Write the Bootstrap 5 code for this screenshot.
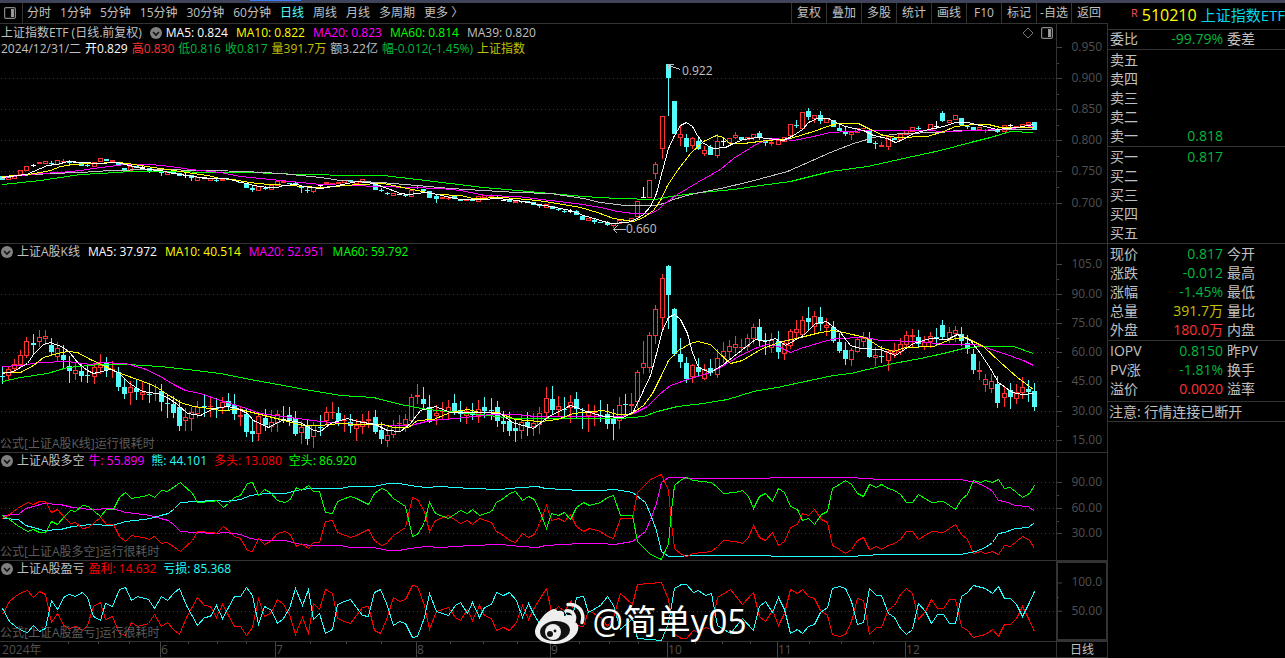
<!DOCTYPE html>
<html lang="zh-CN">
<head>
<meta charset="utf-8">
<meta name="viewport" content="width=device-width, initial-scale=1">
<title>上证指数ETF</title>
<link href="https://cdn.jsdelivr.net/npm/bootstrap@5.3.0/dist/css/bootstrap.min.css" rel="stylesheet">
<style>
:root{--line:#333;--txt:#c0c0c0;--dim:#505050}
body{background:#000;color:var(--txt);font:12px/16px "Open Sans","Noto Sans CJK SC",sans-serif}
.strip{height:3px;background:#40445a}
.strip i{display:block;width:51px;height:1px;margin-left:250px;background:#3c7cf0}
.ln-b{border-bottom:1px solid var(--line)}
.toolbar{height:21px;white-space:nowrap}
.toolbar button,.tool-icon{background:none;border:0;padding:0;color:inherit;line-height:20px}
.toolbar .on{color:#54fcfc}
.periods{gap:9px;padding-left:4px}
.toolbar .win{width:19px;border-right:1px solid var(--line);margin-right:-5px}
.acts{padding-right:2px}
.acts button{width:35px;border-left:1px solid var(--line);text-align:center}
.panel{min-height:60px}
.p1{flex:219 1 0}.p2{flex:208 1 0}.p3{flex:107 1 0}.p4{flex:80 1 0}
.plot,.scale{position:relative}
.plot>svg.draw,.scale>svg{position:absolute;left:0;top:0;width:100%;height:100%}
.scale>svg{width:5px}
.head{position:relative;gap:4px;padding-left:1px;white-space:nowrap;height:16px}
.vals{gap:8px}
.p3 .vals,.p4 .vals{gap:7px}
.p1 .plot{padding-top:1px}
.scale{width:52px;border-left:1px solid var(--line);border-right:1px solid var(--line);color:var(--dim)}
.scale span{position:absolute;right:5px;transform:translateY(-50%)}
.scale.sel{border:1px solid var(--line);outline:1px solid var(--line);outline-offset:-2px}
.slow{position:absolute;left:0;bottom:0;color:#5c5c5c;white-space:nowrap}
.tip{position:absolute;transform:translateY(-50%)}
.tools{position:absolute;right:3px;top:3px;gap:7px}
.time{height:16px;color:var(--dim)}
.time .plot>span{position:absolute;top:0;line-height:15px}
.time .scale{color:var(--txt);line-height:15px}
.quote{width:177px;font-size:14px;line-height:17px}
.quote table{width:100%;table-layout:fixed}
.quote th,.quote td{font-weight:400;padding:0;height:19px;vertical-align:top;white-space:nowrap;overflow:hidden}
.quote th{padding-left:2px}
.quote td+th{padding-left:4px}
.quote th:first-child{width:40px}.quote td{width:75px;text-align:right}
.padt{padding-top:1px}
.padb{padding-bottom:2px}
.note{height:20px;line-height:19px;padding-left:1px}
.code{height:27px;font-size:16px;line-height:24px}
.code small{font-size:11px;line-height:20px;color:#ff5050}
.code b{font-weight:400;font-size:15px;color:#00d8f0}
.w{color:#fff}.y{color:#ff0}.m{color:#f0f}.g{color:#0f0}.c{color:#2ff}
.r{color:#f00}.up{color:#ff3232}.dn{color:#00b83c}.vol{color:#c0c000}
.mark-user{position:absolute;left:50.7%;bottom:0;color:#fff;font-size:34px;line-height:40px;white-space:nowrap;gap:6px;z-index:3;text-shadow:0 0 2px #000}
.mark-user svg{overflow:visible}
</style>
</head>
<body>
<svg width="0" height="0" class="position-absolute" aria-hidden="true">
  <symbol id="fold" viewBox="0 0 12 12"><circle cx="6" cy="6" r="6" fill="#808080"/><path d="M3 5l3 3 3-3" fill="none" stroke="#111" stroke-width="1.6"/></symbol>
  <symbol id="pane" viewBox="0 0 12 12"><rect x=".6" y=".6" width="10.8" height="10.8" rx="1.5" fill="none" stroke="#888" stroke-width="1.2"/><rect x="7" y="2" width="3" height="8" fill="#999"/></symbol>
</svg>
<div class="min-vh-100 d-flex flex-column">
  <div class="strip flex-shrink-0"><i></i></div>
  <div class="d-flex flex-fill">
    <main class="d-flex flex-column flex-fill">
      <nav class="toolbar ln-b d-flex justify-content-between">
        <div class="periods d-flex">
          <button class="win d-flex align-items-center" aria-label="窗口"><svg width="12" height="12"><use href="#pane"/></svg></button>
          <button>分时</button><button>1分钟</button><button>5分钟</button><button>15分钟</button><button>30分钟</button><button>60分钟</button><button class="on">日线</button><button>周线</button><button>月线</button><button>多周期</button><button>更多 〉</button>
        </div>
        <div class="acts d-flex">
          <button>复权</button><button>叠加</button><button>多股</button><button>统计</button><button>画线</button><button>F10</button><button>标记</button><button>-自选</button><button>返回</button>
        </div>
      </nav>

      <section class="panel p1 ln-b d-flex">
        <div class="plot flex-fill" id="k1">
          <div class="head d-flex align-items-center"><span class="ps-0 pe-1">上证指数ETF (日线.前复权)</span><svg width="12" height="12"><use href="#fold"/></svg><div class="vals d-flex"><span class="w">MA5: 0.824</span><span class="y">MA10: 0.822</span><span class="m">MA20: 0.823</span><span class="g">MA60: 0.814</span><span>MA39: 0.820</span></div></div>
          <div class="head d-flex"><span>2024/12/31/二</span><span class="w">开0.829</span><span class="up">高0.830</span><span class="dn">低0.816</span><span class="dn">收0.817</span><span class="vol">量391.7万</span><span>额3.22亿</span><span class="dn">幅-0.012(-1.45%)</span><span class="vol">上证指数</span></div>
          <div class="tools d-flex"><button class="tool-icon d-flex" aria-label="标注"><svg width="12" height="12"><path d="M6 1l5 5-5 5-5-5z" fill="none" stroke="#777"/></svg></button><button class="tool-icon d-flex" aria-label="侧栏"><svg width="12" height="12"><use href="#pane"/></svg></button></div>
        </div>
        <div class="scale"></div>
      </section>

      <section class="panel p2 ln-b d-flex">
        <div class="plot flex-fill" id="k2">
          <div class="head d-flex align-items-center"><svg width="12" height="12"><use href="#fold"/></svg><span>上证A股K线</span><div class="vals d-flex ms-1 ps-0"><span class="w">MA5: 37.972</span><span class="y">MA10: 40.514</span><span class="m">MA20: 52.951</span><span class="g">MA60: 59.792</span></div></div>
          <div class="slow">公式[上证A股K线]运行很耗时</div>
        </div>
        <div class="scale"></div>
      </section>

      <section class="panel p3 ln-b d-flex">
        <div class="plot flex-fill" id="k3">
          <div class="head d-flex align-items-center"><svg width="12" height="12"><use href="#fold"/></svg><span>上证A股多空</span><div class="vals d-flex"><span class="m">牛: 55.899</span><span class="c">熊: 44.101</span><span class="r">多头: 13.080</span><span class="g">空头: 86.920</span></div></div>
          <div class="slow">公式[上证A股多空]运行很耗时</div>
        </div>
        <div class="scale"></div>
      </section>

      <section class="panel p4 ln-b d-flex">
        <div class="plot flex-fill" id="k4">
          <div class="head d-flex align-items-center"><svg width="12" height="12"><use href="#fold"/></svg><span>上证A股盈亏</span><div class="vals d-flex"><span class="r">盈利: 14.632</span><span class="c">亏损: 85.368</span></div></div>
          <div class="slow">公式[上证A股盈亏]运行很耗时</div>
          <div class="mark-user d-flex align-items-center">
            <svg width="51" height="40" viewBox="0 -2 51 40"><path d="M20 9c5-2 10-2 9 4 6-2 12-1 10 6 4 1 5 4 4 8-2 8-12 14-23 14C9 41 0 36 0 29 0 22 11 7 19 6c4 0 4 3 3 6z" fill="#eee"/><ellipse cx="20" cy="28" rx="15" ry="10" fill="#111" transform="rotate(-7 20 28)"/><circle cx="18" cy="29" r="8" fill="#eee"/><circle cx="15" cy="31" r="3" fill="#111"/><circle cx="20" cy="28" r="1.4" fill="#111"/><path d="M31 8c6-1 10 4 8 10M33 1.500c11-1 17 8 14 18" fill="none" stroke="#eee" stroke-width="3.500" stroke-linecap="round"/></svg>
            <span>@简单y05</span>
          </div>
        </div>
        <div class="scale sel"></div>
      </section>

      <footer class="time ln-b d-flex">
        <div class="plot flex-fill" id="months"></div>
        <div class="scale text-center">日线</div>
      </footer>
    </main>

    <aside class="quote flex-shrink-0">
      <div class="code ln-b d-flex justify-content-end"><small class="me-1">R</small><span class="y me-1">510210</span><b>上证指数ETF</b></div>
      <div class="ln-b"><table><tr><th>委比</th><td class="dn">-99.79%</td><th>委差</th></tr></table></div>
      <div class="ln-b padt"><table>
        <tr><th>卖五</th><td></td><th></th></tr><tr><th>卖四</th><td></td><th></th></tr><tr><th>卖三</th><td></td><th></th></tr><tr><th>卖二</th><td></td><th></th></tr><tr><th>卖一</th><td class="dn">0.818</td><th></th></tr>
      </table></div>
      <div class="ln-b padt"><table>
        <tr><th>买一</th><td class="dn">0.817</td><th></th></tr><tr><th>买二</th><td></td><th></th></tr><tr><th>买三</th><td></td><th></th></tr><tr><th>买四</th><td></td><th></th></tr><tr><th>买五</th><td></td><th></th></tr>
      </table></div>
      <div class="ln-b padt"><table>
        <tr><th>现价</th><td class="dn">0.817</td><th>今开</th></tr><tr><th>涨跌</th><td class="dn">-0.012</td><th>最高</th></tr><tr><th>涨幅</th><td class="dn">-1.45%</td><th>最低</th></tr><tr><th>总量</th><td class="vol">391.7万</td><th>量比</th></tr><tr><th>外盘</th><td class="up">180.0万</td><th>内盘</th></tr>
      </table></div>
      <div class="ln-b padt padb"><table>
        <tr><th>IOPV</th><td class="dn">0.8150</td><th>昨PV</th></tr><tr><th>PV涨</th><td class="dn">-1.81%</td><th>换手</th></tr><tr><th>溢价</th><td class="up">0.0020</td><th>溢率</th></tr>
      </table></div>
      <div class="ln-b note">注意: 行情连接已断开</div>
    </aside>
  </div>
</div>
<script src="https://cdn.jsdelivr.net/npm/bootstrap@5.3.0/dist/js/bootstrap.bundle.min.js"></script>
<script>
// Candles: kind (r rising, c falling, w flat), body top, body bottom, optional high, low.
const DAY = `c176-180 r177-180 r176-179 r170-175 r166-171 w165-166-164-167 r162-164 r161-164 c163-164-161-165 r160-165 r161-162-159-162 c162-163-160-165 w162-163 c163-166 c165-166-164-167 r162-167 r158-162 c159-161 r160-162 c162-166 c168-170 r166-171 c166-168 w167-168-165-168 c168-171-168-173 c170-171 c172-173-171-176 r172-175 c172-174 c173-176 w175-176-173-178 c175-178-175-181 r177-181 w178-179 r178-181 c180-181-179-182 r179-181 c179-180 c180-181 c182-183 c184-188 c188-190-186-192 r186-191 c188-189-186-190 r185-190 r181-186 r181-183 c183-184 c183-184-181-186 c187-188-187-193 c190-191-187-193 r187-192-187-193 w185-186-184-187 r182-184 r183-184 r182-184 r180-183 c180-182 r181-184
r179-183 c181-183 c184-190 c190-191-188-192 c193-194-192-195 r193-196 w194-195 c195-196-194-197 r190-197 c187-188-186-189 c189-191 c191-198 c196-199-195-203 r197-199 r198-199-196-200 c196-199 c200-201 r200-201 c199-201 r196-202 r195-198 r196-197-194-198 c197-198-195-199 w200-201 c199-202 r201-203 w201-202-201-203 c201-202 c202-205 c205-206-204-208 r204-208 c206-209 c209-210-208-211 c211-212-209-213 w211-212-209-213 c211-215-210-215 c216-220 r218-221 c220-222-219-224 c222-223 c222-225-221-226 r223-226-223-228 r220-224 w222-223 r218-221 r201-217 w197-198-187-198 r180-198 r164-174-162-179 r116-149-116-159 c64-78-64-116
c101-134 r134-138-126-146 c138-147-134-152 r138-146-137-149 c141-149-138-150 r150-154-146-156 c147-155-145-155 r141-156-134-158 w141-142-137-146 r138-143 r135-138-132-139 c137-140 r137-140 r134-138-134-140 c133-138-131-140 c141-143-141-146 r142-144-141-146 r140-145 r137-142 r124-136 c125-126-120-128 r112-129 c111-117-108-120 r115-119-115-123 c115-121-111-124 r118-123 c120-127 c128-131-125-131 c131-134-126-136 r132-135-132-140 r128-133 r128-129 c130-143 c143-144-141-149 r145-147-142-147 r136-147-136-150 c138-140 r134-140 r130-135 r127-132 c128-129-126-130 r130-131 r124-130 w126-127-121-129 c113-121-111-122 r120-123 r115-120 c118-125 c126-127-125-129 c127-130 r127-130 r130-131-129-133 c129-130 c130-132-128-133 r125-132 w125-126-124-127 r126-128 r124-127 r122-125 c122-130`;
const IDX = `c376-377-367-384 r369-376-366-381 r364-369-359-373 r355-365-350-368 r341-356-337-358 c343-345-334-354 r337-342-330-347 r336-339-330-345 c345-352-338-355 r348-357-342-361 c355-360-345-368 c366-371-356-383 r370-374-363-380 c371-376-364-382 c375-376-365-383 r367-377-363-384 r365-368-354-374 c363-370-357-377 r369-370-361-378 c372-387-367-391 c387-394-378-399 r387-393-381-405 c388-392-379-400 r392-395-382-400 c394-395-383-403 r393-394-384-401 c391-402-384-411 c403-404-394-418 c404-413-396-418 c407-426-400-431 r417-421-408-431 r412-419-407-431 r407-414-401-418 c406-407-394-417 r406-407-397-417 c408-409-398-418 r402-408-397-414 c401-406-393-410 c405-414-394-420 r415-417-407-426 c414-432-408-437 c431-434-420-442 r416-434-412-441 c418-425-409-431 r422-427-410-432 r414-423-410-432 c419-420-406-423 c415-421-407-426 c418-434-411-436 r427-433-421-444 c426-439-420-445 r425-437-422-448 c427-428-415-436 r412-421-407-425 r412-413-402-419 c413-421-407-426 r420-421-415-432 c422-426-414-433 r425-429-419-441
r421-427-414-434 r419-421-411-428 c417-432-410-434 c430-439-422-444 r435-441-427-447 r425-435-420-438 r423-424-415-432 r419-425-414-432 r397-421-394-423 r395-397-384-404 c399-404-387-408 c407-422-395-423 r413-416-405-425 r411-412-402-419 r407-412-400-420 c403-412-394-415 c410-414-401-422 r411-416-407-424 c412-415-403-420 r409-417-400-423 c407-411-397-418 c410-411-398-420 c407-421-401-427 c421-424-411-432 c421-431-412-436 c428-431-419-442 r422-431-414-439 c422-427-412-436 r423-427-413-436 r413-425-407-434 r398-413-387-418 c399-410-386-414 r406-410-396-416 c409-410-397-418 r402-408-395-423 c399-409-392-418 c416-417-408-429 r412-416-404-432 r412-413-405-426 c415-416-400-422 c414-424-404-429 c419-424-409-440 r405-421-397-429 c404-405-394-417 r404-406-393-415 r372-402-370-408 r363-368-341-374 r335-368-332-373 r309-336-305-344 r278-318-274-330 c266-295-265-329
c309-354-308-356 c354-362-338-368 c363-379-357-383 r365-377-364-383 c367-372-358-376 r369-379-364-380 c368-373-359-376 r358-375-349-378 r351-357-342-363 r346-352-340-360 r344-348-336-353 r347-348-339-352 r338-347-334-351 r327-339-324-344 c327-340-319-346 c340-341-333-355 r340-348-333-353 c341-352-331-359 r343-354-340-360 r331-346-329-349 r329-333-320-339 r320-335-316-338 c318-322-307-330 r316-327-311-333 c317-324-307-331 r325-328-318-336 c327-341-321-343 c342-351-333-353 c350-359-342-365 r350-360-348-366 r339-352-337-353 r338-342-332-347 c339-357-332-358 r355-358-347-366 c356-357-346-363 r351-361-350-371 r350-354-343-358 r344-352-338-355 r335-345-331-347 r335-337-329-347 c337-344-330-347 r342-347-336-350 r336-342-332-348 c337-338-328-345 c325-337-320-340 r332-339-327-343 r330-334-326-342 c334-341-327-346 c343-349-335-354 c354-370-349-374 r370-372-361-380 r379-385-374-392 r381-389-374-393 c384-403-376-408 r393-398-386-407 c390-397-383-409 r392-399-384-404 r387-393-377-399 c389-392-380-402 c391-407-383-411`;
const BEAR = "2,518 18,519 25,525 33,527 43,530 60,529 72,526 90,524 112,525 125,521 135,520 150,518 160,515 168,513 174,508 180,502 195,501 215,500 225,501 240,499 250,495 265,493 285,493 300,489 312,488 340,488 350,486 373,486 388,483 398,483 410,485 425,487 440,486 470,488 500,489 520,487 537,486 545,488 563,489 580,490 600,490 614,489 632,492 645,502 650,514 656,530 661,551 668,556 700,555 740,555 800,556 850,556 880,554 960,554 975,551 985,547 992,542 998,533 1004,532 1015,528 1028,527 1034,522";
const SHORT = "2,515 9,519 17,525 27,531 33,529 39,532 45,532 51,521 57,524 64,516 70,510 75,511 82,505 88,506 100,516 106,509 113,509 119,497 125,492 131,498 136,497 143,496 149,494 154,497 161,490 167,491 180,482 192,493 197,502 212,501 216,500 223,507 228,503 234,497 240,495 247,483 252,482 258,495 264,489 270,492 277,500 284,502 289,500 296,487 301,490 308,485 313,491 319,491 325,512 332,513 337,501 350,496 356,498 368,504 374,493 381,488 386,490 393,498 405,506 412,536 417,534 424,522 429,502 435,513 448,518 460,510 467,513 472,509 479,515 491,511 496,502 503,498 509,493 515,491 522,500 528,496 534,499 539,510 546,528 551,513 558,515 564,512 570,519 576,507 583,502 589,505 600,502 607,497 613,495 620,515 632,515 637,541 650,554 661,559 668,543 671,510 674,485 681,479 686,477 693,480 711,482 717,487 723,493 735,492 742,490 748,496 753,508 759,496 765,493 772,501 778,488 784,492 790,506 797,509 802,520 808,518 814,524 821,514 827,511 832,488 839,484 845,480 851,484 857,493 863,496 869,484 876,487 881,484 888,488 894,490 900,494 906,502 912,502 918,494 931,502 943,501 955,509 961,499 967,494 973,480 980,482 985,480 992,482 998,479 1004,488 1010,487 1022,497 1029,493 1034,485";
const LOSS = "2,608 9,621 15,626 21,630 27,632 33,625 39,631 45,628 51,600 57,609 64,596 69,594 75,596 82,592 87,597 93,616 100,620 105,603 112,606 119,589 125,587 131,600 137,596 148,599 154,608 161,596 167,600 173,593 179,588 186,605 197,625 204,617 210,616 216,605 222,618 234,596 240,596 246,587 252,595 258,624 264,606 271,610 277,623 283,618 289,608 295,588 302,605 308,589 313,619 319,613 325,633 332,629 337,604 344,601 350,599 362,615 368,616 374,592 380,589 386,603 393,625 399,621 405,623 412,637 417,636 424,617 429,593 436,611 448,615 455,605 460,602 467,613 472,602 479,617 484,607 491,604 496,592 503,595 509,592 516,600 522,617 528,603 534,615 539,623 546,634 551,610 558,616 564,611 571,622 576,597 583,596 588,612 600,605 607,596 613,605 620,629 632,618 637,638 661,640 668,623 674,588 681,584 686,584 693,592 698,590 705,595 711,593 717,625 730,633 742,618 753,630 759,606 765,601 772,612 778,597 784,609 790,633 797,629 802,633 808,626 814,624 820,612 827,607 832,588 839,586 845,588 851,601 857,624 863,622 869,588 876,595 881,595 888,613 894,617 900,628 906,634 912,629 918,603 925,611 931,623 937,614 943,614 949,623 955,623 961,596 967,592 973,585 985,588 992,593 998,586 1004,598 1010,598 1016,604 1022,616 1029,602 1034,591";
// Complementary series add up to 100, so one is the other reflected about the 50 level.
const flip = (s, mid) => s.replace(/,(\d+)/g, (_, y) => "," + (2 * mid - y));

const W = "#fff", Y = "#ff0", M = "#f0f", G = "#0f0", C = "#2ff", R = "#f00", S = "#c0c0c0";
const panels = {
  k1: {top: 24, h: 219, grid: [78,109,140,171,203], minor: [63,94,125,156,187],
    marks: [[47,"0.950"],[78,"0.900"],[109,"0.850"],[140,"0.800"],[171,"0.750"],[203,"0.700"]],
    tips: [[682,71,"0.922"],[626,229,"0.660"]],
    arrows: "M680 69L668 65M673 64H668V68M625 229H613M617 225L613 229L617 233",
    bars: DAY, lines: [
    [G,"2,184 40,180 60,177 80,174 100,173 130,171 250,172 300,174 357,175 383,175 417,179 450,183 483,187 517,190 550,193 583,196 617,198 655,199 670,196 700,192 733,189 760,185 790,181 830,171 867,166 903,158 940,150 970,142 990,137 1010,131 1033,132"],
    [S,"2,178 20,175 50,173 80,172 110,170 150,169 210,170 245,171 280,173 300,175 320,177 340,180 357,181 380,182 417,185 450,188 483,190 517,192 550,193 583,198 600,202 625,205 655,205 663,203 673,199 690,194 720,188 750,181 787,171 830,152 853,143 877,136 900,133 940,132 957,130 1033,129"],
    [M,"2,177 20,175 40,173 60,172 80,170 100,167 125,164 150,164 170,166 190,169 220,172 240,176 260,178 290,181 320,184 350,185 380,186 410,187 440,188 460,190 485,195 517,196 550,200 583,204 600,207 617,211 633,213 650,213 657,210 663,204 677,194 697,182 720,169 733,158 757,143 773,138 793,140 813,136 830,132 867,130 927,130 943,131 980,130 1010,128 1033,126"],
    [Y,"2,176 27,174 40,172 50,170 60,166 73,164 90,163 118,162 127,163 140,165 153,167 167,169 180,171 193,173 207,175 220,178 233,179 243,181 257,183 270,184 290,185 303,186 320,187 333,186 347,185 357,184 383,183 417,190 437,194 460,195 473,198 503,197 537,200 557,203 580,207 597,212 613,218 633,221 643,217 653,210 660,200 667,185 677,170 690,153 703,141 716,135 723,137 729,143 743,143 767,140 790,138 813,131 827,126 837,123 858,123 870,129 883,135 897,137 927,136 943,131 955,126 973,124 988,124 1000,127 1033,127"],
    [W,"2,177 26,174 33,171 40,168 47,165 57,164 67,161 83,162 97,163 117,162 125,164 133,166 147,169 160,170 173,173 187,175 200,177 213,178 227,178 240,182 247,183 253,185 267,187 277,187 283,185 297,184 303,186 320,188 333,186 347,183 357,181 373,183 387,188 400,193 408,194 425,192 437,194 450,197 460,199 483,199 497,198 517,200 533,203 550,206 570,210 583,215 597,219 610,223 627,222 635,219 643,214 650,206 656,193 662,170 668,148 674,135 680,125 686,122 692,126 697,135 702,142 712,148 725,147 733,143 743,139 757,137 767,138 783,140 793,135 802,129 808,122 817,118 828,118 835,122 845,126 863,130 873,135 887,138 895,142 903,139 913,133 928,129 943,126 955,122 967,122 980,125 997,129 1017,127 1033,124"]]},
  k2: {top: 244, h: 208, grid: [294,323,352,381,411,440], minor: [279,309,338,367,396,426],
    marks: [[264,"105.0"],[294,"90.00"],[323,"75.00"],[352,"60.00"],[381,"45.00"],[411,"30.00"],[440,"15.00"]],
    bars: IDX, lines: [
    [G,"2,381 20,377 47,373 67,367 100,364 127,364 160,366 187,369 220,373 250,379 283,385 310,390 340,395 357,396 373,397 400,404 427,409 457,412 480,414 513,418 620,418 643,416 657,411 677,406 703,403 727,399 753,391 777,387 800,382 833,375 850,373 867,369 893,363 920,358 943,353 963,348 980,346 1013,346 1033,353"],
    [M,"2,366 20,365 40,362 67,361 90,364 100,362 125,363 143,368 160,376 173,384 185,390 200,393 220,400 240,406 260,413 290,417 320,421 357,424 410,425 430,420 455,418 490,414 515,414 535,416 570,416 620,416 633,413 647,406 660,393 670,385 690,378 710,372 725,364 740,355 757,347 767,344 778,346 790,352 800,348 820,342 835,338 865,337 880,340 920,341 943,344 975,344 985,347 1003,353 1023,360 1033,365"],
    [Y,"2,372 20,372 33,365 43,357 57,353 67,351 77,352 90,359 107,367 120,373 140,380 155,386 167,394 180,402 193,406 210,408 220,410 240,409 260,414 280,419 303,425 320,425 340,423 357,424 383,424 393,427 408,427 417,420 433,419 450,412 467,409 480,412 497,412 515,419 540,421 557,419 573,413 603,410 617,414 630,414 643,405 652,393 660,377 668,360 678,350 690,343 697,341 710,344 718,352 730,363 742,360 760,349 778,342 800,337 820,332 833,330 843,332 865,337 880,347 893,351 905,347 933,346 950,339 965,337 983,346 1000,362 1017,377 1033,389"],
    [W,"2,373 13,371 27,363 33,354 43,344 50,342 63,347 70,353 78,363 87,370 93,373 110,369 118,372 128,382 140,390 147,392 157,393 167,397 177,404 187,413 200,415 213,408 227,406 237,408 247,413 253,420 268,427 283,419 300,422 313,430 320,431 330,423 347,418 357,421 375,424 387,430 400,431 410,423 420,410 435,406 450,412 465,412 483,412 500,413 512,422 533,428 547,417 570,405 583,410 603,416 623,417 633,411 643,390 650,375 655,357 662,330 668,317 674,314 680,319 687,333 692,352 698,367 710,372 723,364 737,353 755,339 765,341 775,338 785,345 803,335 815,323 826,321 840,332 850,345 860,348 880,349 895,355 913,343 930,338 947,339 957,334 970,340 980,353 990,368 998,382 1012,392 1022,394 1033,393"]]},
  k3: {top: 453, h: 107, grid: [482,508,533], minor: [495,521], marks: [[482,"90.00"],[508,"60.00"],[533,"30.00"]],
    lines: [[M,flip(BEAR,516.5)],[C,BEAR],[R,flip(SHORT,516.5)],[G,SHORT]]},
  k4: {top: 561, h: 80, grid: [611], minor: [597], marks: [[582,"100.0"],[611,"50.00"]],
    lines: [[R,flip(LOSS,611)],[C,LOSS]]}
};
const STEP = 6.107;
function candles(text) {
  return text.trim().split(/\s+/).map((s, i) => {
    const [t, b, hi = t, lo = b] = s.slice(1).split("-").map(Number);
    const x = Math.floor(2.5 + i * STEP), col = {r: "#ff3232", c: "#54fcfc", w: "#fff"}[s[0]];
    let o = "";
    if (hi < t) o += `<rect x="${x}" y="${hi}" width="1" height="${t - hi}" fill="${col}"/>`;
    if (lo > b) o += `<rect x="${x}" y="${b}" width="1" height="${lo - b}" fill="${col}"/>`;
    return o + (s[0] === "r" && b - t > 2
      ? `<rect x="${x - 1.5}" y="${t + .5}" width="4" height="${b - t - 1}" fill="none" stroke="${col}"/>`
      : `<rect x="${x - 2}" y="${t}" width="5" height="${b - t}" fill="${col}"/>`);
  }).join("");
}
for (const [id, p] of Object.entries(panels)) {
  const plot = document.getElementById(id), scale = plot.nextElementSibling;
  const pct = y => ((y - p.top) / p.h * 100).toFixed(2) + "%";
  let s = p.grid.map(y => `<path d="M1 ${y + .5}H1056" stroke="#3a3a3a" stroke-dasharray="1 3"/>`).join("");
  if (p.bars) s += candles(p.bars);
  s += p.lines.map(([c, pts]) => `<polyline transform="translate(.5 .5)" points="${pts}" fill="none" stroke="${c}"/>`).join("");
  if (p.arrows) s += `<path transform="translate(.5 .5)" d="${p.arrows}" fill="none" stroke="#c0c0c0"/>`;
  plot.insertAdjacentHTML("afterbegin", `<svg class="draw" viewBox="0 ${p.top} 1056 ${p.h}" preserveAspectRatio="none" shape-rendering="crispEdges">${s}</svg>`);
  for (const [x, y, t] of p.tips || []) plot.insertAdjacentHTML("beforeend", `<span class="tip" style="left:${(x / 10.56).toFixed(2)}%;top:${pct(y)}">${t}</span>`);
  scale.innerHTML = `<svg viewBox="0 ${p.top} 5 ${p.h}" preserveAspectRatio="none" shape-rendering="crispEdges"><path stroke="#444" d="${p.marks.map(m => `M0 ${m[0] + .5}h5`).join("")}${p.minor.map(y => `M0 ${y + .5}h2`).join("")}"/></svg>`
    + p.marks.map(([y, t]) => `<span style="top:${pct(y)}">${t}</span>`).join("");
}
const months = [[160,"6"],[275,"7"],[416,"8"],[550,"9"],[667,"10"],[777,"11"],[905,"12"]];
const weeks = [68,98,129,188,217,246,310,346,381,450,483,517,579,609,638,695,722,750,809,841,873];
document.getElementById("months").innerHTML =
  `<svg class="draw" viewBox="0 0 1056 15" preserveAspectRatio="none" shape-rendering="crispEdges"><path stroke="#444" d="${months.map(m => `M${m[0] + .5} 0v15`).join("")}${weeks.map(x => `M${x + .5} 0v2`).join("")}"/></svg><span style="left:.2%">2024年</span>`
  + months.map(([x, t]) => `<span style="left:${((x + 1) / 10.56).toFixed(2)}%">${t}</span>`).join("");
</script>
</body>
</html>
